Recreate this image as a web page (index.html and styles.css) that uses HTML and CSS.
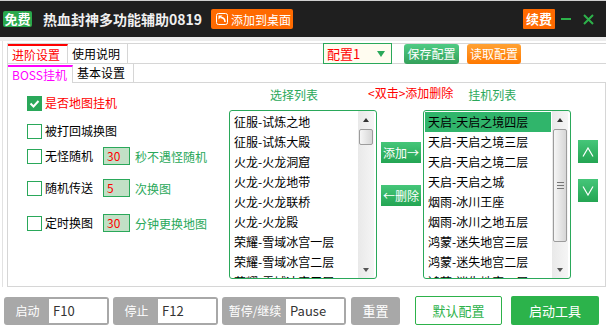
FILE: index.html
```html
<!DOCTYPE html>
<html lang="zh">
<head>
  <meta charset="UTF-8">
  <title>热血封神多功能辅助0819</title>
  <link rel="stylesheet" href="styles.css">
</head>
<body>
  <div class="titlebar">
    <span class="badge">免费</span>
    <span class="app-title">热血封神多功能辅助0819</span>
    <span class="btn-desktop">
      <svg width="12" height="12" viewBox="0 0 12 12"><rect x="0.5" y="0.5" width="11" height="11" rx="2" fill="none" stroke="#fff"/><path d="M2.5 2.5h4l-4 4z" fill="#fff"/><path d="M4.5 4.5c2.5 0 4.5 1.5 4.5 4.5" stroke="#fff" stroke-width="1.6" fill="none"/></svg>
      添加到桌面
    </span>
    <span class="renew">续费</span>
    <svg class="win-min" width="10" height="4"><rect y="1" width="10" height="2" fill="#2db24a"/></svg>
    <svg class="win-close" width="11" height="11"><path d="M1 1L10 10M10 1L1 10" stroke="#2db24a" stroke-width="2"/></svg>
  </div>
  <div class="strip"></div>

  <div class="panel">
    <div class="tabbar">
      <span class="tab active">进阶设置</span>
      <span class="tab">使用说明</span>
      <div class="cfg-select"><span>配置1</span><i class="caret"></i></div>
      <span class="btn-save">保存配置</span>
      <span class="btn-load">读取配置</span>
    </div>
    <div class="subtabs">
      <span class="subtab active">BOSS挂机</span>
      <span class="subtab second">基本设置</span>
      <span class="subtab-fill"></span>
    </div>

    <div class="content">
      <div class="options">
        <div class="opt-row r1">
          <span class="cb checked"><svg width="13" height="13" viewBox="0 0 13 13"><path d="M2.5 6.5l3 3l5-5.5" stroke="#fff" stroke-width="2" fill="none"/></svg></span>
          <span class="opt-label red">是否地图挂机</span>
        </div>
        <div class="opt-row r2">
          <span class="cb"></span>
          <span class="opt-label">被打回城换图</span>
        </div>
        <div class="opt-row r3">
          <span class="cb"></span>
          <span class="opt-label fixed">无怪随机</span>
          <span class="num">30</span>
          <span class="unit">秒不遇怪随机</span>
        </div>
        <div class="opt-row r4">
          <span class="cb"></span>
          <span class="opt-label fixed">随机传送</span>
          <span class="num">5</span>
          <span class="unit">次换图</span>
        </div>
        <div class="opt-row r5">
          <span class="cb"></span>
          <span class="opt-label fixed">定时换图</span>
          <span class="num">30</span>
          <span class="unit">分钟更换地图</span>
        </div>
      </div>

      <div class="lists">
        <div class="list-head">
          <span class="hd-select">选择列表</span>
          <span class="hd-tip">&lt;双击&gt;添加删除</span>
          <span class="hd-hang">挂机列表</span>
        </div>
        <div class="list-row">
          <div class="listbox">
            <div class="items">
              <div class="item">征服-试炼之地</div>
              <div class="item">征服-试炼大殿</div>
              <div class="item">火龙-火龙洞窟</div>
              <div class="item">火龙-火龙地带</div>
              <div class="item">火龙-火龙联桥</div>
              <div class="item">火龙-火龙殿</div>
              <div class="item">荣耀-雪域冰宫一层</div>
              <div class="item">荣耀-雪域冰宫二层</div>
              <div class="item">荣耀-雪域冰宫三层</div>
            </div>
            <div class="sb">
              <div class="sb-btn"><i class="tri-up"></i></div>
              <div class="sb-track"><div class="thumb small"></div></div>
              <div class="sb-btn"><i class="tri-down"></i></div>
            </div>
          </div>

          <div class="mid-btns">
            <span class="gbtn">添加→</span>
            <span class="gbtn">←删除</span>
          </div>

          <div class="listbox right">
            <div class="items">
              <div class="item selected">天启-天启之境四层</div>
              <div class="item">天启-天启之境三层</div>
              <div class="item">天启-天启之境二层</div>
              <div class="item">天启-天启之城</div>
              <div class="item">烟雨-冰川王座</div>
              <div class="item">烟雨-冰川之地五层</div>
              <div class="item">鸿蒙-迷失地宫三层</div>
              <div class="item">鸿蒙-迷失地宫二层</div>
              <div class="item">鸿蒙-迷失地宫一层</div>
            </div>
            <div class="sb">
              <div class="sb-btn"><i class="tri-up"></i></div>
              <div class="sb-track"><div class="thumb big"><i></i><i></i><i></i></div></div>
              <div class="sb-btn"><i class="tri-down"></i></div>
            </div>
          </div>

          <div class="updown">
            <span class="gbtn sq"><svg width="12" height="10"><polyline points="1,9.5 6,1 11,9.5" stroke="#fff" stroke-width="1.2" fill="none"/></svg></span>
            <span class="gbtn sq"><svg width="12" height="10"><polyline points="1,0.5 6,9 11,0.5" stroke="#fff" stroke-width="1.2" fill="none"/></svg></span>
          </div>
        </div>
      </div>
    </div>
  </div>

  <div class="bottombar">
    <div class="hk"><span class="hk-label">启动</span><span class="hk-input">F10</span></div>
    <div class="hk"><span class="hk-label">停止</span><span class="hk-input">F12</span></div>
    <div class="hk wide"><span class="hk-label">暂停/继续</span><span class="hk-input">Pause</span></div>
    <span class="btn-reset">重置</span>
    <span class="btn-default">默认配置</span>
    <span class="btn-start">启动工具</span>
  </div>
</body>
</html>
```

FILE: styles.css
```css
* {
  box-sizing: border-box;
}
body {
  margin: 0;
  width: 606px;
  height: 332px;
  overflow: hidden;
  background: #fff;
  color: #000;
  font-family: "Noto Sans CJK SC", sans-serif;
  font-size: 12px;
}

/* title bar */
.titlebar {
  height: 37px;
  border-top: 1px solid #cfcfcf;
  background: #1f1f1f;
  display: flex;
  align-items: center;
  padding: 0 12px 0 3px;
}
.badge {
  width: 29px;
  height: 16px;
  background: #29a84c;
  color: #fff;
  font-size: 13px;
  font-weight: bold;
  line-height: 16px;
  text-align: center;
  border-radius: 2px;
}
.app-title {
  margin-left: 11px;
  color: #f0f0f0;
  font-size: 14px;
  font-weight: bold;
  line-height: 20px;
}
.btn-desktop {
  margin-left: 9px;
  width: 82px;
  height: 20px;
  background: #ff6a00;
  border-radius: 2px;
  color: #fff;
  font-size: 12px;
  display: flex;
  align-items: center;
  gap: 3px;
  padding-left: 5px;
}
.renew {
  margin-left: auto;
  width: 32px;
  height: 20px;
  background: #ff6a00;
  color: #fff;
  font-size: 13px;
  font-weight: bold;
  line-height: 20px;
  text-align: center;
  border-radius: 1px;
}
.win-min {
  margin-left: 6px;
}
.win-close {
  margin-left: 12px;
}
.strip {
  height: 4px;
  background: #ececec;
}

/* main panel */
.panel {
  margin-left: 2px;
  border-left: 1px solid #e2e2e2;
  padding: 2px 0 0 4px;
}
.tabbar {
  display: flex;
  height: 21px;
  border: 1px solid #d6d6d6;
  border-right: none;
}
.tab {
  width: 60px;
  padding: 1px 0 0 4px;
  border-right: 1px solid #d6d6d6;
  line-height: 17px;
}
.tab.active {
  color: #ff0000;
  border-top: 2px solid #ff0000;
  padding-top: 0;
}
.cfg-select {
  margin: -1px 0 -1px 195px;
  width: 69px;
  height: 21px;
  border: 1px solid #2aa85a;
  background: #fffcf0;
  color: #ff0000;
  font-size: 13px;
  display: flex;
  align-items: center;
  justify-content: space-between;
  padding: 0 6px 0 3px;
}
.caret {
  border-left: 4px solid transparent;
  border-right: 4px solid transparent;
  border-top: 6px solid #2aa85a;
}
.btn-save,
.btn-load {
  margin-left: 12px;
  width: 55px;
  height: 20px;
  border-radius: 3px;
  color: #fff;
  line-height: 20px;
  text-align: center;
  font-size: 12px;
}
.btn-save {
  background: linear-gradient(#4fcb84, #34a05a);
}
.btn-load {
  margin-left: 8px;
  width: 54px;
  background: linear-gradient(#ffa234, #ff7800);
}

.subtabs {
  display: flex;
  height: 19px;
  border-left: 1px solid #d6d6d6;
}
.subtab {
  width: 61px;
  padding: 1px 0 0 4px;
  border-right: 1px solid #d6d6d6;
  border-bottom: 1px solid #d6d6d6;
  line-height: 16px;
}
.subtab.active {
  width: 65px;
  color: #ff00ff;
  border-top: 2px solid #ff00ff;
  border-bottom: none;
  padding-top: 0;
  margin-top: 1px;
}
.subtab-fill {
  flex: 1;
  border-bottom: 1px solid #d6d6d6;
}

.content {
  display: flex;
  height: 204px;
  border: 1px solid #d6d6d6;
  border-top: none;
}

/* options */
.options {
  width: 221px;
  padding: 11px 0 0 19px;
}
.opt-row {
  display: flex;
  align-items: center;
  height: 18px;
}
.r2 { margin-top: 10px; }
.r3 { margin-top: 7px; }
.r4 { margin-top: 14px; }
.r5 { margin-top: 17px; }
.cb {
  width: 15px;
  height: 15px;
  border: 1px solid #2aa85a;
  background: #fff;
  display: flex;
  align-items: center;
  justify-content: center;
}
.cb.checked {
  background: #2aa85a;
}
.opt-label {
  margin-left: 3px;
  line-height: 18px;
}
.opt-label.fixed {
  width: 48px;
}
.red {
  color: #ff0000;
}
.num {
  margin-left: 10px;
  width: 27px;
  height: 18px;
  border: 1px solid #2aa85a;
  background: #c2e0c6;
  color: #ff0000;
  padding-left: 3px;
  line-height: 16px;
}
.unit {
  margin-left: 5px;
  color: #2aa85a;
}

/* lists */
.lists {
  padding-top: 4px;
}
.list-head {
  display: flex;
  height: 16px;
  line-height: 16px;
}
.hd-select {
  margin-left: 41px;
  color: #2aa85a;
}
.hd-tip {
  margin: -2px 0 0 50px;
  color: #ff0000;
}
.hd-hang {
  margin-left: 15px;
  color: #2aa85a;
}
.list-row {
  display: flex;
  align-items: flex-start;
  margin-top: 7px;
}
.listbox {
  width: 148px;
  height: 169px;
  border: 1px solid #2aa85a;
  border-radius: 3px;
  display: flex;
  overflow: hidden;
}
.listbox.right {
  margin-left: 2px;
}
.items {
  flex: 1;
  padding: 1px;
  overflow: hidden;
}
.item {
  height: 20px;
  line-height: 20px;
  padding-left: 3px;
  white-space: nowrap;
}
.item.selected {
  background: #30b56b;
}
.sb {
  width: 16px;
  margin-right: 2px;
  display: flex;
  flex-direction: column;
  background: linear-gradient(to right, #e9e9e9, #f5f5f5);
}
.sb-btn {
  height: 17px;
  display: flex;
  align-items: center;
  justify-content: center;
}
.tri-up {
  border-left: 3.5px solid transparent;
  border-right: 3.5px solid transparent;
  border-bottom: 4px solid #333;
}
.tri-down {
  border-left: 3.5px solid transparent;
  border-right: 3.5px solid transparent;
  border-top: 4px solid #555;
}
.sb-track {
  flex: 1;
  padding: 1px 1px 0;
}
.thumb {
  border: 1px solid #9c9c9c;
  border-radius: 2px;
  background: linear-gradient(to right, #f6f6f6, #d6d6d6);
}
.thumb.small {
  height: 16px;
}
.thumb.big {
  height: 113px;
  display: flex;
  flex-direction: column;
  align-items: center;
  justify-content: center;
  gap: 2px;
}
.thumb.big i {
  width: 7px;
  height: 1px;
  background: #777;
}

.mid-btns {
  margin-left: 4px;
  width: 40px;
  padding-top: 32px;
  display: flex;
  flex-direction: column;
  gap: 22px;
}
.gbtn {
  height: 21px;
  background: linear-gradient(#45c679, #24a553);
  color: #fff;
  line-height: 21px;
  text-align: center;
  white-space: nowrap;
  overflow: hidden;
}
.updown {
  margin-left: 7px;
  width: 20px;
  padding-top: 30px;
  display: flex;
  flex-direction: column;
  gap: 16px;
}
.gbtn.sq {
  height: 23px;
  display: flex;
  align-items: center;
  justify-content: center;
}

/* bottom bar */
.bottombar {
  display: flex;
  align-items: center;
  margin-top: 9px;
  padding-left: 4px;
  height: 29px;
}
.hk {
  display: flex;
  align-items: center;
  width: 105px;
  height: 28px;
  padding: 2px;
  margin-right: 4px;
  background: #a8a8a8;
  border-radius: 3px;
}
.hk.wide {
  width: 124px;
  margin-right: 5px;
}
.hk-label {
  width: 43px;
  color: #fff;
  font-size: 12px;
  text-align: center;
}
.hk.wide .hk-label {
  width: 62px;
}
.hk-input {
  width: 58px;
  height: 24px;
  background: #fff;
  color: #333;
  font-size: 13px;
  line-height: 24px;
  padding-left: 4px;
}
.btn-reset {
  width: 49px;
  height: 28px;
  background: #a8a8a8;
  border-radius: 3px;
  color: #fff;
  font-size: 13px;
  line-height: 28px;
  text-align: center;
}
.btn-default {
  margin-left: 15px;
  width: 87px;
  height: 29px;
  border: 1px solid #2db24a;
  border-radius: 2px;
  color: #2db24a;
  font-size: 13px;
  line-height: 27px;
  text-align: center;
}
.btn-start {
  margin-left: 9px;
  width: 88px;
  height: 29px;
  background: #2cb34b;
  border-radius: 2px;
  color: #fff;
  font-size: 13px;
  line-height: 29px;
  text-align: center;
}
```
